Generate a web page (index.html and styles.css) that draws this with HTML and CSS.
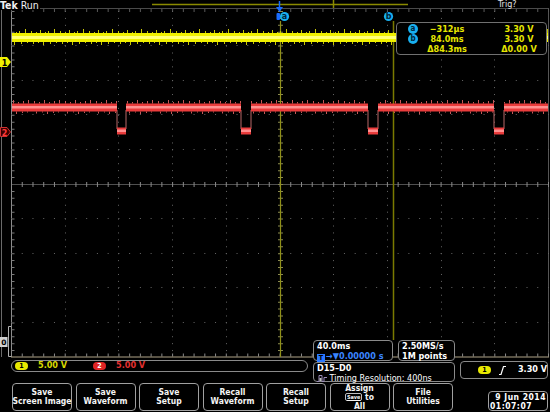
FILE: index.html
```html
<!DOCTYPE html>
<html>
<head>
<meta charset="utf-8">
<title>Tek Run</title>
<link rel="stylesheet" href="styles.css">
</head>
<body>
<div class="scope">
  <div class="display">
    <svg class="grat" width="550" height="383" viewBox="0 0 550 383">
      <defs>
        <pattern id="ny" x="0" y="28" width="29" height="18" patternUnits="userSpaceOnUse">
          <path d="M2.5 3v2M7.5 4v1M11.5 2v3M16.5 4v1M19.5 3v2M25.5 1v4M4.5 14v2M9.5 14v1M14.5 14v3M21.5 14v2M27.5 14v1" stroke="#c8c800" stroke-width="1"/>
        </pattern>
        <pattern id="nr" x="0" y="98" width="31" height="18" patternUnits="userSpaceOnUse">
          <path d="M3.5 3v2.5M8.5 4v1.5M13.5 2v3.5M18.5 4v1.5M23.5 3v2.5M28.5 2v3.5M5.5 13.5v2M11.5 13.5v1M16.5 13.5v2.5M22.5 13.5v1.5M27.5 13.5v1" stroke="#c85858" stroke-width="1"/>
        </pattern>
      </defs>

      <line x1="1.5" y1="0" x2="1.5" y2="357" stroke="#6a6a6a"/>

      <line x1="152" y1="4.5" x2="408" y2="4.5" stroke="#8a8a00" stroke-width="1.5"/>
      <line x1="333.5" y1="0" x2="333.5" y2="8" stroke="#8a8a00" stroke-width="1.5"/>

      <line x1="11" y1="8.5" x2="549" y2="8.5" stroke="#4a4a4a"/>
      <line x1="548.5" y1="8" x2="548.5" y2="357" stroke="#555"/>
      <line x1="11.5" y1="8" x2="11.5" y2="357" stroke="#8c8c8c"/>
      <line x1="13" y1="11" x2="13" y2="357" stroke="#7a7a7a" stroke-width="3" stroke-dasharray="1 5.92"/>
      <line x1="11" y1="10.5" x2="549" y2="10.5" stroke="#5a5a5a" stroke-width="3" stroke-dasharray="1 9.74"/>
      <line x1="11" y1="355" x2="549" y2="355" stroke="#8a8a8a" stroke-width="3" stroke-dasharray="1 9.74"/>
      <line x1="11" y1="357" x2="549" y2="357" stroke="#b0a488" stroke-width="1.2"/>

      <g stroke="#666" stroke-dasharray="1 5.92">
        <line x1="65.5" y1="11" x2="65.5" y2="357"/>
        <line x1="118.5" y1="11" x2="118.5" y2="357"/>
        <line x1="172.5" y1="11" x2="172.5" y2="357"/>
        <line x1="226.5" y1="11" x2="226.5" y2="357"/>
        <line x1="333.5" y1="11" x2="333.5" y2="357"/>
        <line x1="387.5" y1="11" x2="387.5" y2="357"/>
        <line x1="441.5" y1="11" x2="441.5" y2="357"/>
        <line x1="494.5" y1="11" x2="494.5" y2="357"/>
      </g>
      <g stroke="#666" stroke-dasharray="1 9.74">
        <line x1="11" y1="45.5" x2="549" y2="45.5"/>
        <line x1="11" y1="80.5" x2="549" y2="80.5"/>
        <line x1="11" y1="114.5" x2="549" y2="114.5"/>
        <line x1="11" y1="149.5" x2="549" y2="149.5"/>
        <line x1="11" y1="218.5" x2="549" y2="218.5"/>
        <line x1="11" y1="253.5" x2="549" y2="253.5"/>
        <line x1="11" y1="287.5" x2="549" y2="287.5"/>
        <line x1="11" y1="322.5" x2="549" y2="322.5"/>
      </g>
      <line x1="12" y1="184.5" x2="548" y2="184.5" stroke="#505050"/>
      <line x1="11" y1="184.5" x2="549" y2="184.5" stroke="#8a8a8a" stroke-width="5" stroke-dasharray="1 9.74"/>
      <line x1="280.5" y1="11" x2="280.5" y2="357" stroke="#8a8a50" stroke-width="5" stroke-dasharray="1 5.92"/>

      <line x1="280.5" y1="21" x2="280.5" y2="357" stroke="#909018" stroke-width="1.2"/>
      <line x1="393.5" y1="21" x2="393.5" y2="340" stroke="#7a7a00" stroke-width="1.5"/>

      <rect x="12" y="29" width="536" height="17" fill="url(#ny)"/>
      <rect x="12" y="33" width="536" height="9" fill="#f0f000"/>
      <rect x="12" y="36" width="536" height="3" fill="#ffff78"/>

      <rect x="12" y="98" width="105" height="18" fill="url(#nr)"/>
      <rect x="126" y="98" width="115" height="18" fill="url(#nr)"/>
      <rect x="251" y="98" width="117" height="18" fill="url(#nr)"/>
      <rect x="378" y="98" width="116" height="18" fill="url(#nr)"/>
      <rect x="504" y="98" width="44" height="18" fill="url(#nr)"/>
      <g stroke="#b86868" stroke-width="1">
        <line x1="117" y1="110" x2="117" y2="129"/>
        <line x1="126" y1="110" x2="126" y2="129"/>
        <line x1="241" y1="110" x2="241" y2="129"/>
        <line x1="251" y1="110" x2="251" y2="129"/>
        <line x1="368" y1="110" x2="368" y2="129"/>
        <line x1="378" y1="110" x2="378" y2="129"/>
        <line x1="494" y1="110" x2="494" y2="129"/>
        <line x1="504" y1="110" x2="504" y2="129"/>
      </g>
      <g fill="#ea3c3c">
        <rect x="12" y="103.5" width="105" height="8"/>
        <rect x="126" y="103.5" width="115" height="8"/>
        <rect x="251" y="103.5" width="117" height="8"/>
        <rect x="378" y="103.5" width="116" height="8"/>
        <rect x="504" y="103.5" width="44" height="8"/>
        <rect x="117" y="127.5" width="9" height="7"/>
        <rect x="241" y="127.5" width="10" height="7"/>
        <rect x="368" y="127.5" width="10" height="7"/>
        <rect x="494" y="127.5" width="10" height="7"/>
      </g>
      <g fill="#ff9090">
        <rect x="12" y="106" width="105" height="2.5"/>
        <rect x="126" y="106" width="115" height="2.5"/>
        <rect x="251" y="106" width="117" height="2.5"/>
        <rect x="378" y="106" width="116" height="2.5"/>
        <rect x="504" y="106" width="44" height="2.5"/>
        <rect x="117" y="129.5" width="9" height="2.5"/>
        <rect x="241" y="129.5" width="10" height="2.5"/>
        <rect x="368" y="129.5" width="10" height="2.5"/>
        <rect x="494" y="129.5" width="10" height="2.5"/>
      </g>

      <line x1="279.5" y1="1" x2="279.5" y2="9" stroke="#1a6cff" stroke-width="1.5"/>
      <polygon points="276,7 283,7 279.5,12" fill="#1a6cff"/>
      <rect x="276.5" y="13" width="3.5" height="7" rx="1" fill="#1a6cff"/>

      <circle cx="284.5" cy="16.5" r="4.6" fill="#18b0f0"/>
      <text x="284.5" y="19.3" class="clab">a</text>
      <circle cx="388.5" cy="16.5" r="4.6" fill="#18b0f0"/>
      <text x="388.5" y="19.3" class="clab">b</text>

      <polygon points="0,57 7,57 11,62 7,67 0,67" fill="#f0f000"/>
      <text x="4.5" y="65.5" class="mk1">1</text>
      <polygon points="0.5,127.5 7,127.5 10.5,132 7,136.5 0.5,136.5" fill="#3a0000" stroke="#d03030"/>
      <text x="4.5" y="135.5" class="mk2">2</text>
      <path d="M11 326.5H8.5V356.5H11" fill="none" stroke="#b0b0b0"/>
      <rect x="0" y="337" width="7.5" height="10" fill="#d0d0d0"/>
      <text x="3.8" y="345.2" class="mk0">0</text>
    </svg>

    <div class="hdr"><span class="tek">Tek</span> <span class="run">Run</span></div>
    <div class="trig">Trig?</div>

    <div class="readout">
      <span class="cur">a</span><span class="val">−312µs</span><span class="volt">3.30 V</span>
      <span class="cur">b</span><span class="val">84.0ms</span><span class="volt">3.30 V</span>
      <span class="val">Δ84.3ms</span><span class="volt">Δ0.00 V</span>
    </div>

    <div class="status">
      <div class="box chbar">
        <span class="oval ov1">1</span><span class="chv c1">5.00 V</span>
        <span class="oval ov2">2</span><span class="chv c2">5.00 V</span>
      </div>
      <div class="box tb">
        <div class="ln">40.0ms</div>
        <div class="ln blue"><span class="ticon">T</span>→▼0.00000 s</div>
      </div>
      <div class="box sr">
        <div class="ln">2.50MS/s</div>
        <div class="ln">1M points</div>
      </div>
      <div class="box dig">
        <div class="ln">D15–D0</div>
        <div class="ln reg"><svg class="dicon" width="10" height="8" viewBox="0 0 10 8"><path d="M0 7.5H2V1.5H5V7.5H7V3.5H10" fill="none" stroke="#9a8ab8" stroke-width="1"/><rect x="2.5" y="4" width="2" height="3" fill="#c0c0c0"/></svg> Timing Resolution: 400ns</div>
      </div>
      <div class="box trg">
        <span class="oval ov1">1</span>
        <svg class="edge" width="7" height="9" viewBox="0 0 7 9"><path d="M0 8.5H2L4.5 0.5H7" fill="none" stroke="#fff" stroke-width="1.2"/></svg>
        <span class="tlv">3.30 V</span>
      </div>
    </div>
  </div>

  <div class="softkeys">
    <div class="sk"><span>Save</span><span>Screen Image</span></div>
    <div class="sk"><span>Save</span><span>Waveform</span></div>
    <div class="sk"><span>Save</span><span>Setup</span></div>
    <div class="sk"><span>Recall</span><span>Waveform</span></div>
    <div class="sk"><span>Recall</span><span>Setup</span></div>
    <div class="sk sk3"><span>Assign</span><span><span class="savebadge">Save</span> to</span><span>All</span></div>
    <div class="sk"><span>File</span><span>Utilities</span></div>
    <div class="date"><div class="d1">9 Jun 2014</div><div class="d2">01:07:07</div></div>
  </div>
</div>
</body>
</html>
```

FILE: styles.css
```css
html, body {
  margin: 0;
  padding: 0;
  background: #000;
}

.scope {
  width: 550px;
  height: 412px;
  background: #000;
  overflow: hidden;
  color: #fff;
  font-family: "DejaVu Sans Condensed", "DejaVu Sans", sans-serif;
}

.display {
  position: relative;
  height: 383px;
}

.grat {
  display: block;
}

.clab {
  font-family: "DejaVu Sans", sans-serif;
  font-size: 8px;
  font-weight: bold;
  fill: #00263a;
  text-anchor: middle;
}

.mk1, .mk2, .mk0 {
  font-family: "DejaVu Sans", sans-serif;
  font-size: 8px;
  font-weight: bold;
  text-anchor: middle;
}
.mk1 { fill: #000; }
.mk2 { fill: #ff3a3a; }
.mk0 { fill: #000; font-size: 7.5px; }

.hdr {
  position: absolute;
  left: 0;
  top: 0;
  font-size: 10.5px;
  line-height: 10px;
  color: #f0f0f0;
  background: #000;
  padding-right: 1px;
}
.tek { font-weight: bold; }

.trig {
  position: absolute;
  left: 498px;
  top: 0;
  font-size: 9px;
  line-height: 9px;
  color: #e0e0e0;
}

.readout {
  position: absolute;
  left: 396px;
  top: 22px;
  width: 149px;
  height: 30px;
  padding-top: 1px;
  border: 1px solid #707070;
  border-radius: 4px;
  background: #000;
  display: grid;
  grid-template-columns: 24px 52px 20px 52px;
  grid-auto-rows: 10px;
  align-items: center;
  color: #e6e600;
  font-size: 9px;
  font-weight: bold;
}

.cur {
  grid-column: 1;
  justify-self: end;
  margin-right: 3px;
  width: 10px;
  height: 10px;
  border-radius: 50%;
  background: #18b0f0;
  color: #00263a;
  font-size: 8px;
  line-height: 10px;
  text-align: center;
}

.val {
  grid-column: 2;
  text-align: center;
  white-space: nowrap;
}

.volt {
  grid-column: 4;
  text-align: center;
  white-space: nowrap;
}

.status {
  position: absolute;
  left: 11px;
  top: 340px;
  display: grid;
  grid-template-columns: 297px 80px 57px 88px;
  grid-template-rows: 21px 21px;
  column-gap: 5px;
  row-gap: 1px;
}

.box {
  box-sizing: border-box;
  border: 1px solid #8a8a8a;
  border-radius: 4px;
  background: #000;
  font-size: 9px;
  line-height: 9.5px;
  font-weight: bold;
  white-space: nowrap;
}

.ln {
  padding-left: 3px;
}

.chbar {
  grid-column: 1;
  grid-row: 2;
  align-self: start;
  margin-top: -2px;
  height: 12px;
  border-radius: 6px;
  display: flex;
  align-items: center;
  padding-left: 3px;
}

.oval {
  display: inline-block;
  width: 13px;
  height: 8px;
  border-radius: 4px;
  font-size: 7px;
  line-height: 8px;
  text-align: center;
  font-weight: bold;
}
.ov1 { background: #e8e800; color: #000; }
.ov2 { background: #e02424; color: #fff; }

.chv { margin-left: 10px; }
.c1 { color: #d8d800; margin-right: 26px; }
.c2 { color: #e43030; }

.tb {
  grid-column: 2;
  grid-row: 1;
  padding-top: 1px;
}

.sr {
  grid-column: 3;
  grid-row: 1;
  padding-top: 1px;
}

.dig {
  grid-column: 2 / 4;
  grid-row: 2;
  height: 20px;
  padding-top: 1px;
}

.trg {
  grid-column: 4;
  grid-row: 2;
  margin-top: -1px;
  height: 18px;
  display: flex;
  align-items: center;
  padding-left: 17px;
}

.blue {
  color: #3a86ff;
}

.ticon {
  display: inline-block;
  width: 8px;
  height: 8px;
  margin-right: 1px;
  background: #2a78ff;
  color: #000;
  font-size: 7px;
  line-height: 8px;
  text-align: center;
  vertical-align: -1px;
}

.reg {
  font-weight: normal;
}

.dicon {
  vertical-align: -1px;
}

.edge {
  margin-left: 8px;
}

.tlv {
  margin-left: 12px;
}

.softkeys {
  display: flex;
  height: 29px;
  padding-left: 12px;
  column-gap: 3.5px;
}

.sk {
  box-sizing: border-box;
  width: 60px;
  height: 28px;
  border: 1px solid #a0a0a0;
  border-radius: 4px;
  display: flex;
  flex-direction: column;
  justify-content: center;
  align-items: center;
  font-size: 8.5px;
  line-height: 9.5px;
  font-weight: bold;
  text-align: center;
  white-space: nowrap;
  color: #f4f4f4;
}

.sk3 {
  line-height: 9px;
}

.savebadge {
  display: inline-block;
  font-size: 5.5px;
  line-height: 6px;
  padding: 0 1px;
  border: 1px solid #c0c0c0;
  border-radius: 2px;
  text-decoration: underline;
  vertical-align: 1px;
}

.date {
  box-sizing: border-box;
  margin-left: auto;
  margin-right: 2px;
  margin-top: 8px;
  width: 60px;
  height: 20px;
  border: 1px solid #a0a0a0;
  border-radius: 4px;
  font-size: 8.5px;
  line-height: 9px;
  font-weight: bold;
  letter-spacing: 0.5px;
  white-space: nowrap;
  padding-top: 1px;
}

.d1 {
  text-align: right;
  padding-right: 1px;
}

.d2 {
  padding-left: 1px;
}
```
